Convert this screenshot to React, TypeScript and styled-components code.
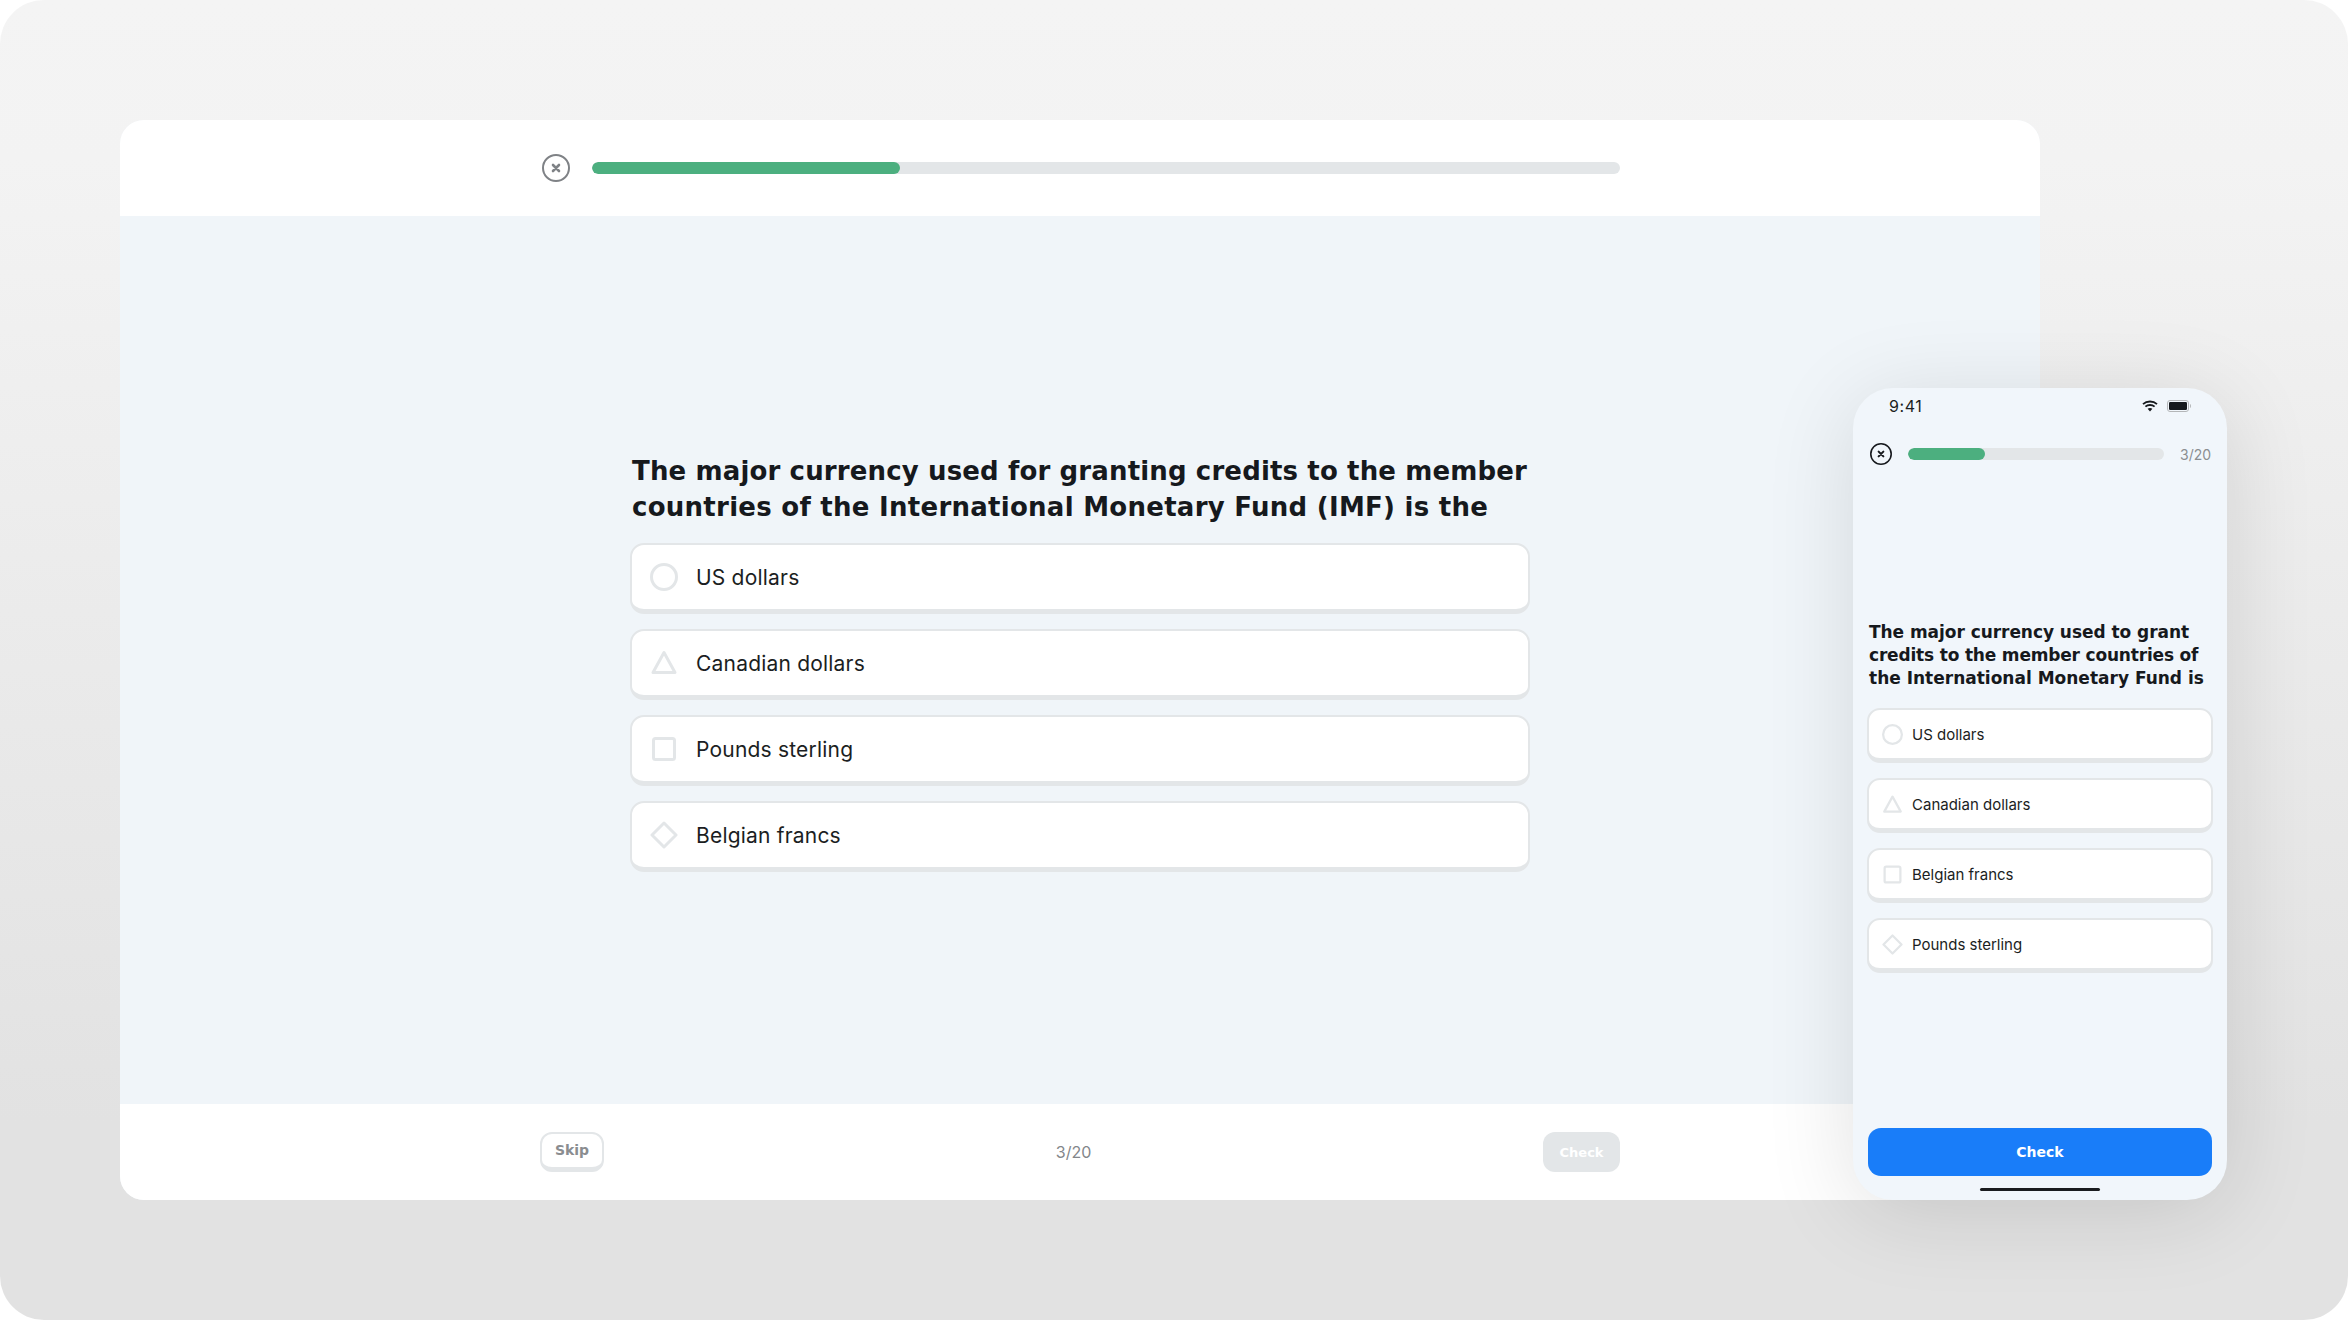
import styled, { createGlobalStyle } from "styled-components";

const GlobalStyle = createGlobalStyle`
    * {
        box-sizing: border-box;
    }
    html, body {
        margin: 0;
        background: #fff;
    }
    body {
        font-family: "Inter", "Liberation Sans", sans-serif;
        color: #16191d;
    }
`;

const Frame = styled.div`
    position: relative;
    width: 2348px;
    height: 1320px;
    padding: 120px 308px 120px 120px;
    border-radius: 44px;
    overflow: hidden;
    background: linear-gradient(180deg, #f4f4f4 0%, #f3f3f3 12%, #e2e2e2 85%, #e2e2e2 100%);
`;

const Card = styled.div`
    display: flex;
    flex-direction: column;
    height: 1080px;
    border-radius: 24px;
    overflow: hidden;
    background: #f0f5f9;
`;

const TopBar = styled.header`
    display: flex;
    align-items: center;
    gap: 22px;
    height: 96px;
    padding: 0 420px 0 422px;
    background: #fff;
`;

const Track = styled.div`
    flex: 1;
    height: 12px;
    border-radius: 6px;
    background: #e3e6e8;
    overflow: hidden;
`;

const Fill = styled.div`
    height: 100%;
    border-radius: 6px;
    background: #4caf7f;
`;

const Main = styled.main`
    flex: 1;
    display: flex;
    flex-direction: column;
    justify-content: center;
    padding: 5px 510px 0;
`;

const Question = styled.h1`
    margin: 0 0 18px;
    padding-left: 2px;
    font-family: "DejaVu Sans", sans-serif;
    font-size: 26px;
    line-height: 36px;
    font-weight: 700;
    white-space: nowrap;
    color: #16191d;
`;

const Line = styled.span<{ $spacing: number }>`
    display: block;
    letter-spacing: ${props => props.$spacing}px;
`;

const Options = styled.div`
    display: flex;
    flex-direction: column;
    gap: 15px;
`;

const Option = styled.div<{ $small?: boolean }>`
    display: flex;
    align-items: center;
    height: ${props => (props.$small ? 55 : 71)}px;
    padding-left: ${props => (props.$small ? 13 : 18)}px;
    gap: ${props => (props.$small ? 9 : 18)}px;
    background: #fff;
    border: 2px solid #e3e6e8;
    border-bottom-width: 5px;
    border-radius: ${props => (props.$small ? 13 : 14)}px;
    font-size: ${props => (props.$small ? 15 : 21)}px;
    letter-spacing: ${props => (props.$small ? 0 : 0.2)}px;
    color: #1b1e22;
`;

const Footer = styled.footer`
    display: flex;
    align-items: center;
    justify-content: space-between;
    height: 96px;
    padding: 0 420px;
    background: #fff;
`;

const SkipButton = styled.button`
    width: 64px;
    height: 40px;
    padding: 0 0 2px;
    background: #fff;
    border: 2px solid #e3e6e8;
    border-bottom-width: 5px;
    border-radius: 12px;
    font-family: "DejaVu Sans", sans-serif;
    font-size: 14px;
    font-weight: 700;
    color: #8a8d90;
`;

const Count = styled.span`
    font-size: 16px;
    color: #83868a;
`;

const DisabledCheck = styled.button`
    width: 77px;
    height: 40px;
    padding: 0;
    background: #e3e6e8;
    border: 0;
    border-radius: 12px;
    font-family: "DejaVu Sans", sans-serif;
    font-size: 13px;
    font-weight: 700;
    color: #fff;
`;

const Phone = styled.section`
    position: absolute;
    left: 1853px;
    top: 388px;
    width: 374px;
    height: 812px;
    display: flex;
    flex-direction: column;
    padding: 0 14px;
    border-radius: 40px;
    background: #f1f6fb;
    box-shadow: 0 12px 90px rgba(0, 0, 0, 0.12);
`;

const StatusBar = styled.div`
    display: flex;
    align-items: center;
    justify-content: space-between;
    height: 36px;
    padding: 0 22px;
`;

const Clock = styled.span`
    font-size: 16px;
    letter-spacing: 0.6px;
    color: #1b1e22;
`;

const StatusIcons = styled.div`
    display: flex;
    align-items: center;
    gap: 9px;
`;

const PhoneHeader = styled.div`
    display: flex;
    align-items: center;
    height: 24px;
    margin-top: 18px;
    padding-left: 3px;
    gap: 16px;
`;

const PhoneCount = styled.span`
    width: 33px;
    font-size: 14px;
    color: #8b8e91;
`;

const PhoneMain = styled.div`
    flex: 1;
    display: flex;
    flex-direction: column;
    justify-content: center;
`;

const PhoneQuestion = styled.h2`
    margin: 0 0 18px;
    padding-left: 2px;
    font-family: "DejaVu Sans", sans-serif;
    font-size: 17px;
    line-height: 23px;
    font-weight: 700;
    white-space: nowrap;
    color: #16191d;
`;

const CheckButton = styled.button`
    flex: none;
    height: 48px;
    margin: 0 1px;
    border: 0;
    border-radius: 13px;
    background: #197df9;
    font-family: "DejaVu Sans", sans-serif;
    font-size: 14px;
    font-weight: 700;
    color: #fff;
`;

const HomeBar = styled.div`
    flex: none;
    align-self: center;
    width: 120px;
    height: 3px;
    margin: 12px 0 9px;
    background: #1a1c1f;
    border-radius: 2px;
`;

function CloseIcon({ size, color, width }: { size: number; color: string; width: number }) {
    return (
        <svg width={size} height={size} viewBox="0 0 28 28" fill="none" style={{ flex: "none" }}>
            <circle cx="14" cy="14" r={14 - width / 2} stroke={color} strokeWidth={width} />
            <path d="M11 11l6 6M17 11l-6 6" stroke={color} strokeWidth={width + 0.6} strokeLinecap="round" />
        </svg>
    );
}

type ShapeKind = "circle" | "triangle" | "square" | "diamond";

function Shape({ kind, size }: { kind: ShapeKind; size: number }) {
    const stroke = { stroke: "#e3e6e8", strokeWidth: 3, strokeLinejoin: "round" as const };
    return (
        <svg width={size} height={size} viewBox="0 0 28 28" fill="none" style={{ flex: "none" }}>
            {kind === "circle" && <circle cx="14" cy="14" r="12.5" {...stroke} />}
            {kind === "triangle" && <path d="M14 3.5 L25 23.5 H3 Z" {...stroke} />}
            {kind === "square" && <rect x="3.5" y="3.5" width="21" height="21" rx="2" {...stroke} />}
            {kind === "diamond" && <path d="M14 2 L26 14 L14 26 L2 14 Z" {...stroke} />}
        </svg>
    );
}

function Wifi() {
    return (
        <svg width="16" height="12" viewBox="0 0 16 12" fill="none">
            <path d="M1 4.2C4.9 .6 11.1 .6 15 4.2" stroke="#16191d" strokeWidth="1.8" />
            <path d="M3.4 6.7C5.9 4.4 10.1 4.4 12.6 6.7" stroke="#16191d" strokeWidth="1.8" />
            <path d="M5.6 8.8C7 7.6 9 7.6 10.4 8.8L8 11.6Z" fill="#16191d" />
        </svg>
    );
}

function Battery() {
    return (
        <svg width="24" height="12" viewBox="0 0 24 12" fill="none">
            <rect x=".5" y=".5" width="21" height="11" rx="2.5" stroke="#b4b6b8" />
            <rect x="2" y="2" width="18" height="8" rx="1.2" fill="#16191d" />
            <path d="M23 4v4c.7-.3 1-1.2 1-2s-.3-1.700-1-2z" fill="#b4b6b8" />
        </svg>
    );
}

const desktopOptions: { kind: ShapeKind; label: string }[] = [
    { kind: "circle", label: "US dollars" },
    { kind: "triangle", label: "Canadian dollars" },
    { kind: "square", label: "Pounds sterling" },
    { kind: "diamond", label: "Belgian francs" },
];

const phoneOptions: { kind: ShapeKind; label: string }[] = [
    { kind: "circle", label: "US dollars" },
    { kind: "triangle", label: "Canadian dollars" },
    { kind: "square", label: "Belgian francs" },
    { kind: "diamond", label: "Pounds sterling" },
];

function App() {
    return (
        <Frame>
            <GlobalStyle />
            <Card>
                <TopBar>
                    <CloseIcon size={28} color="#7f8286" width={2} />
                    <Track>
                        <Fill style={{ width: "30%" }} />
                    </Track>
                </TopBar>
                <Main>
                    <Question>
                        <Line $spacing={0.14}>The major currency used for granting credits to the member</Line>
                        <Line $spacing={0.27}>countries of the International Monetary Fund (IMF) is the</Line>
                    </Question>
                    <Options>
                        {desktopOptions.map(option => (
                            <Option key={option.label}>
                                <Shape kind={option.kind} size={28} />
                                {option.label}
                            </Option>
                        ))}
                    </Options>
                </Main>
                <Footer>
                    <SkipButton>Skip</SkipButton>
                    <Count>3/20</Count>
                    <DisabledCheck>Check</DisabledCheck>
                </Footer>
            </Card>
            <Phone>
                <StatusBar>
                    <Clock>9:41</Clock>
                    <StatusIcons>
                        <Wifi />
                        <Battery />
                    </StatusIcons>
                </StatusBar>
                <PhoneHeader>
                    <CloseIcon size={22} color="#16191d" width={2} />
                    <Track>
                        <Fill style={{ width: "30%" }} />
                    </Track>
                    <PhoneCount>3/20</PhoneCount>
                </PhoneHeader>
                <PhoneMain>
                    <PhoneQuestion>
                        <Line $spacing={-0.05}>The major currency used to grant</Line>
                        <Line $spacing={-0.18}>credits to the member countries of</Line>
                        <Line $spacing={0}>the International Monetary Fund is</Line>
                    </PhoneQuestion>
                    <Options>
                        {phoneOptions.map(option => (
                            <Option key={option.label} $small>
                                <Shape kind={option.kind} size={21} />
                                {option.label}
                            </Option>
                        ))}
                    </Options>
                </PhoneMain>
                <CheckButton>Check</CheckButton>
                <HomeBar />
            </Phone>
        </Frame>
    );
}

export default App;
